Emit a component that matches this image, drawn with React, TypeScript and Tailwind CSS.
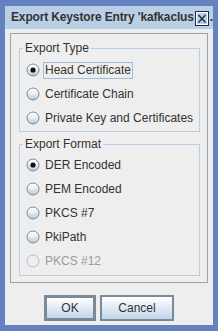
import React from 'react'

const Radio = ({ checked = false, disabled = false }: { checked?: boolean; disabled?: boolean }) => (
  <svg width="14" height="14" viewBox="0 0 14 14" className="shrink-0">
    <defs>
      <linearGradient id="rg" x1="0" y1="0" x2="0" y2="1">
        <stop offset="0" stopColor="#ffffff" />
        <stop offset="0.4" stopColor="#eef3f8" />
        <stop offset="1" stopColor="#adc4dc" />
      </linearGradient>
    </defs>
    <circle
      cx="7"
      cy="7"
      r="6"
      fill={disabled ? '#eeeeee' : 'url(#rg)'}
      stroke={disabled ? '#b8bec6' : '#7a8a99'}
      strokeWidth="1"
    />
    {checked && <circle cx="7" cy="7" r="2.6" fill="#111111" />}
  </svg>
)

const Option = ({
  label,
  checked,
  disabled,
  focused,
}: {
  label: string
  checked?: boolean
  disabled?: boolean
  focused?: boolean
}) => (
  <div className="h-[24px] flex items-center pl-[6px]">
    <Radio checked={checked} disabled={disabled} />
    <span
      className={`ml-[3px] h-[17px] leading-[15px] px-[1px] border ${
        focused ? 'border-[#a3bed8]' : 'border-transparent'
      } ${disabled ? 'text-[#9a9a9a]' : 'text-[#333333]'}`}
    >
      {label}
    </span>
  </div>
)

const App = () => {
  return (
    <div
      className="w-[218px] h-[331px] bg-[#6382bf] pt-[6px] px-[5px] pb-[6px] flex flex-col text-[12px]"
      style={{ fontFamily: '"Liberation Sans", Arial, sans-serif' }}
    >
      <div className="h-[23px] bg-[#b8cfe5] flex items-center pl-[6px] shrink-0">
        <span className="whitespace-nowrap font-bold text-[#333333] leading-[15px] tracking-[-0.15px]">
          Export Keystore Entry 'kafkaclus
        </span>
        <svg width="14" height="15" viewBox="0 0 14 15" className="shrink-0 mt-[1px] ml-[1px]">
          <rect x="0.5" y="0.5" width="13" height="14" fill="#b8cfe5" stroke="#1d2a44" />
          <rect x="1.5" y="1.5" width="11" height="12" fill="none" stroke="#ffffff" />
          <path d="M3.5 4 L10.5 11.5 M10.5 4 L3.5 11.5" stroke="#1d2a44" strokeWidth="1.4" />
        </svg>
        <span className="font-bold text-[#333333] ml-[1px] leading-[15px]">.</span>
      </div>

      <div className="flex-1 bg-[#eeeeee] flex flex-col">
        <div className="mt-[4px] mx-[5px] border border-[#a2a2a2] pt-[7px] pl-[8px] pr-[7px] pb-[6px]">
          <fieldset className="border border-[#b8cfe5] pt-[3px] pb-[1px] px-0 m-0">
            <legend className="ml-[3px] px-[2px] h-[14px] leading-[14px] text-[#333333]">Export Type</legend>
            <Option label="Head Certificate" checked focused />
            <Option label="Certificate Chain" />
            <Option label="Private Key and Certificates" />
          </fieldset>

          <fieldset className="mt-[5px] border border-[#b8cfe5] pt-[2px] pb-[2px] px-0 m-0">
            <legend className="ml-[3px] px-[2px] h-[14px] leading-[14px] text-[#333333]">Export Format</legend>
            <Option label="DER Encoded" checked />
            <Option label="PEM Encoded" />
            <Option label="PKCS #7" />
            <Option label="PkiPath" />
            <Option label="PKCS #12" disabled />
          </fieldset>
        </div>

        <div className="mt-[12px] flex justify-center gap-[4px]">
          <button className="w-[52px] h-[26px] border-[3px] border-[#7a8a99] bg-gradient-to-b from-[#ffffff] to-[#c3d6ea] text-[#333333] text-[12px]">
            OK
          </button>
          <button className="w-[74px] h-[26px] border-2 border-[#7a8a99] bg-gradient-to-b from-[#ffffff] to-[#c3d6ea] text-[#333333] text-[12px]">
            Cancel
          </button>
        </div>
      </div>
    </div>
  )
}

export default App
